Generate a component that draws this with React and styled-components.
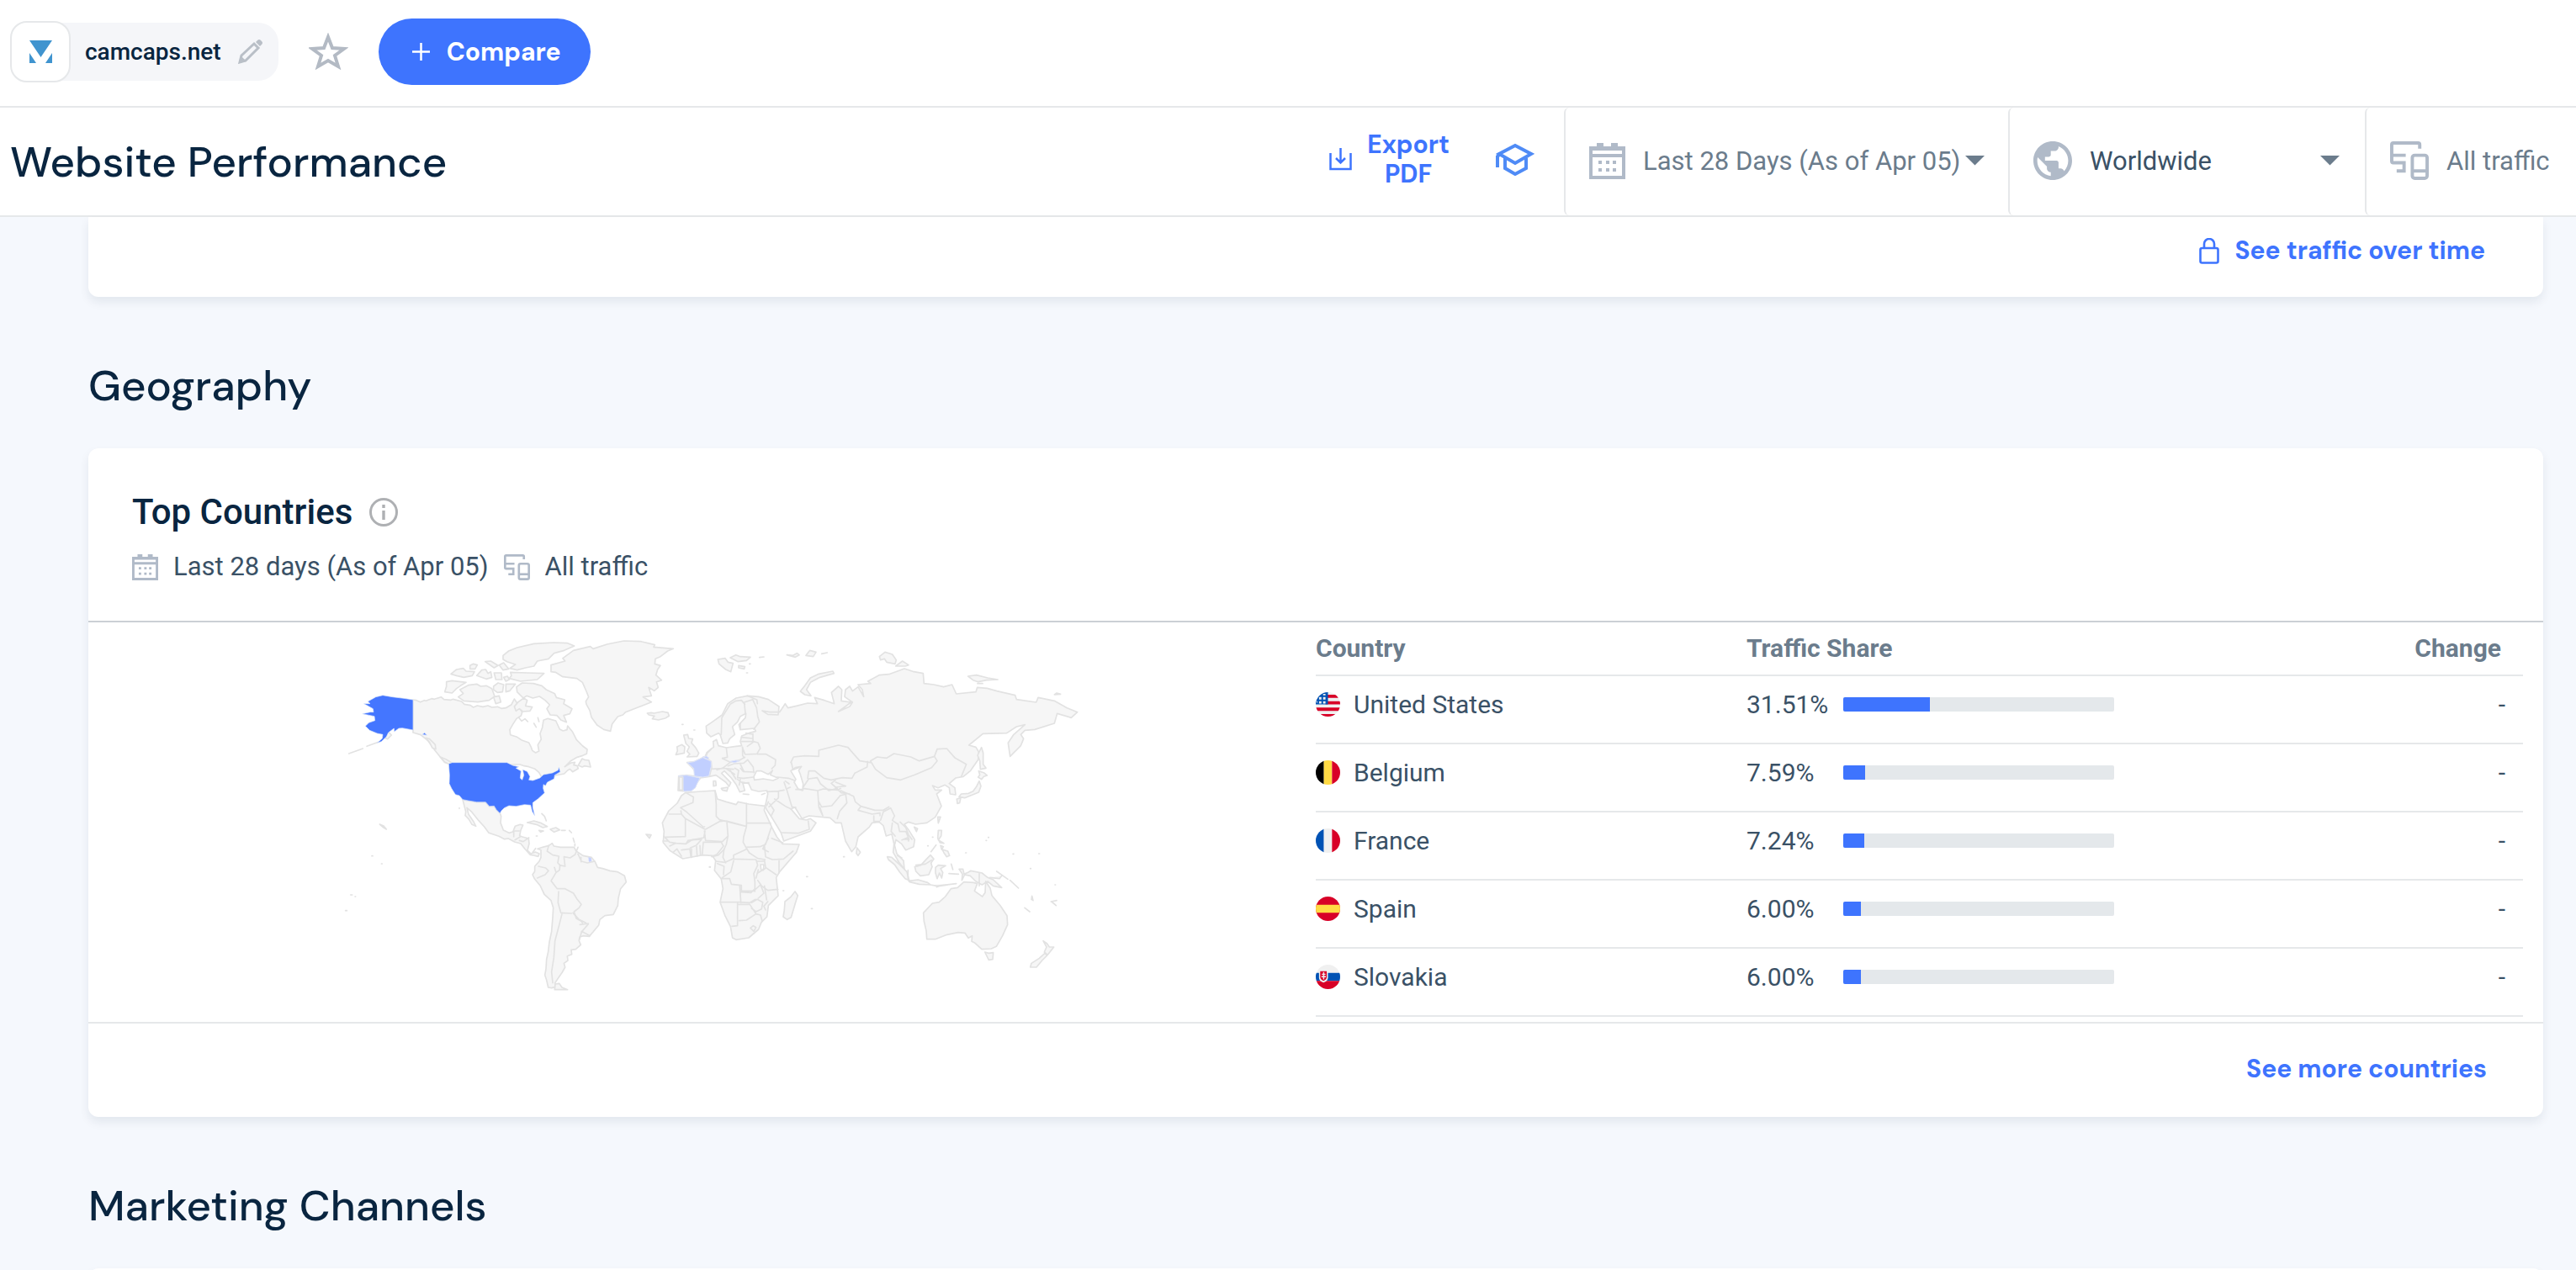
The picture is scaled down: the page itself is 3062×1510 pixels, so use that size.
import React, { useState } from 'react'
import styled, { createGlobalStyle } from 'styled-components';
import { MdPublic } from 'react-icons/md';

const countries = [
    { code: 'us', name: 'United States', share: 31.51 },
    { code: 'be', name: 'Belgium', share: 7.59 },
    { code: 'fr', name: 'France', share: 7.24 },
    { code: 'es', name: 'Spain', share: 6 },
    { code: 'sk', name: 'Slovakia', share: 6 },
];

/* ---------- icons ---------- */

const CalendarIcon = ({ size }) => (
    <svg width={size} height={size} viewBox='0 0 43 43' fill='#b0bac8' aria-hidden='true'>
        <path fillRule='evenodd' d='M9 0h8v4h9V0h8v4h9v39H0V4h9zM4 9v4h35V9zM4 17v22h35V17z' />
        <path d='M11 21h4v4h-4zM20 21h4v4h-4zM28 21h4v4h-4zM11 30h4v4h-4zM20 30h4v4h-4zM28 30h4v4h-4z' />
    </svg>
)

const DevicesIcon = ({ size }) => (
    <svg width={size} height={size} viewBox='0 0 47 47' fill='none' stroke='#b0bac8' strokeWidth='4' aria-hidden='true'>
        <path d='M36 9V4q0-2-2-2H4Q2 2 2 4v20q0 2 2 2h13v10H8M2 17h17' />
        <rect x='27' y='17' width='18' height='28' rx='3' />
        <path d='M27 36h18' />
    </svg>
)

const CaretIcon = () => (
    <svg width='23' height='12' viewBox='0 0 23 12' aria-hidden='true'>
        <path d='M0 0h23L11.500 11.500z' fill='#6b7c8c' />
    </svg>
)

const LogoIcon = () => (
    <svg width='27' height='27' viewBox='0 0 27 27' fill='#4094cf' aria-hidden='true'>
        <path d='M0 0h27L13.500 20zM0 15l8 12H0zM27 15l-8 12h8z' />
    </svg>
)

const PencilIcon = () => (
    <svg width='30' height='30' viewBox='0 0 30 30' aria-hidden='true'>
        <path d='M2 28l2-8L19 6l5 5L9 26z' fill='none' stroke='#b9bfc7' strokeWidth='3' />
        <path d='M1 29l2-9 7 7zM21 4l2-2q2-2 4 0l1 1q2 2 0 4l-2 2z' fill='#b9bfc7' />
    </svg>
)

const StarIcon = () => (
    <svg width='47' height='44' viewBox='0 0 47 44' aria-hidden='true'>
        <path d='M23 5l5 13 14 1-11 8 4 13-12-7-12 7 4-13-11-8 14-1z' fill='none' stroke='#b3bac4' strokeWidth='4' />
    </svg>
)

const PlusIcon = () => (
    <svg width='21' height='21' viewBox='0 0 21 21' aria-hidden='true'>
        <path d='M10.500 0v21M0 10.500h21' stroke='#fff' strokeWidth='2.500' />
    </svg>
)

const DownloadIcon = () => (
    <svg width='27' height='27' viewBox='0 0 27 27' fill='none' stroke='#3e74fe' strokeWidth='2.500' aria-hidden='true'>
        <path d='M1.500 6v19h24V6M13.500 0v17M8 12l5.500 5.500L19 12' />
    </svg>
)

const AcademyIcon = () => (
    <svg width='47' height='39' viewBox='0 0 47 39' fill='none' stroke='#4f8bf6' strokeWidth='4' aria-hidden='true'>
        <path d='M24 3l19 10-19 11L5 13zM3 29V16l3-3M12 18v12l12 7 13-7V18' />
    </svg>
)

const LockIcon = () => (
    <svg width='24' height='31' viewBox='0 0 24 31' fill='none' stroke='#3e74fe' strokeWidth='2.600' aria-hidden='true'>
        <rect x='1.500' y='12' width='21' height='17.500' rx='2' />
        <path d='M6 12V7a6 6 0 0 1 12 0v5' />
    </svg>
)

const InfoIcon = () => (
    <svg width='34' height='34' viewBox='0 0 34 34' aria-hidden='true'>
        <circle cx='17' cy='17' r='15.500' fill='none' stroke='#aeb0b3' strokeWidth='3' />
        <path d='M15.300 15h3.400v11h-3.400zM15.300 8h3.400v4h-3.400z' fill='#aeb0b3' />
    </svg>
)

const flagArt = {
    us: (
        <>
            <path d='M0 0h30v30H0z' fill='#f0f0f0' />
            <path d='M12 3h18v4H12zM12 11h18v4H12zM0 19h30v4H0zM0 27h30v3H0z' fill='#d80027' />
            <path d='M0 0h15v15H0z' fill='#0052b4' />
            <path d='M4 6h3v3H4zM9 6h3v3H9zM4 11h3v3H4zM9 11h3v3H9zM9 2h3v2H9zM1 11h1v2H1z' fill='#f0f0f0' />
        </>
    ),
    be: (
        <>
            <path d='M0 0h10v30H0z' fill='#000' />
            <path d='M10 0h10v30H10z' fill='#ffda44' />
            <path d='M20 0h10v30H20z' fill='#d80027' />
        </>
    ),
    fr: (
        <>
            <path d='M0 0h10v30H0z' fill='#0052b4' />
            <path d='M10 0h10v30H10z' fill='#f0f0f0' />
            <path d='M20 0h10v30H20z' fill='#d80027' />
        </>
    ),
    es: (
        <>
            <path d='M0 0h30v30H0z' fill='#d80027' />
            <path d='M0 10h30v10H0z' fill='#ffda44' />
        </>
    ),
    sk: (
        <>
            <path d='M0 0h30v10H0z' fill='#f0f0f0' />
            <path d='M0 10h30v10H0z' fill='#0052b4' />
            <path d='M0 20h30v10H0z' fill='#d80027' />
            <path d='M4 8h11v8q0 4-5.500 6Q4 20 4 16z' fill='#f0f0f0' />
            <path d='M5.500 8h8v7q0 3-4 5-4-2-4-5z' fill='#d80027' />
            <path d='M9 9h1.500v2H12v1.500h-1.500V14h2v1.500h-2V18H9v-2.500H7V14h2v-1.500H7.500V11H9z' fill='#f0f0f0' />
        </>
    ),
}

/* ---------- world map ---------- */

const westLand = [
    // Canada mainland
    'M273 276l12 2 14 6 14-6 6 2 20-8 10 2 24-8 10 9 25 2 8-3 30 8 10 10 22 4 10 7 14-6 20 4 18-4 14 6 20-2 14 6 16-2 20-12 10-20 12 18 16 30-4 12-16 10-14 22-10 18 2 18 24 8 18 12 24 8 8 16 4 12 12 8 12-6-4-22 12-20-4-20 8-22 4-26 16-6 28 8 14 30 12 6 14-4 2-14 18 22 14 28 22 22 16 12-2 16-14 6-20 6-24 14-20 20 22-14 14-2-4 10 12 2 4 10-20 12-10-10-8 5-12 12-32 6-13 12-25 9-14-2 4-12-10-18-14-12-22-8-20-4-12-4H413l-28-8-34-42-26-36-25-20-27-8z',
    // Mexico and Central America
    'M450 632l20 4 30 5h32l13 15 17-1 8 13 13 13 4 10-2 24 10 26 20 10 14-4 8-20 18-6 10 2-8 18-4 20 10 4 22 6 2 18-6 24 12 12 16-6 14 6-4 10-16-4-12-2-20-22-14-18-22-6-22-12-14 2-20-10-36-12-16-22-20-22-24-30-18-16 6 24 18 26 8 16-14-6-12-20-12-12 2-14z',
    // South America
    'M717 808l18-6 22-6 12-8 6 10 24 4 30 0 18 0 8 14 24 16 30 6 14 18 8 18 18 4 26 8 28 4 24 14 6 22-20 24-8 34-2 26-16 32-30 4-18 14-4 20-20 24-14 16-20-2-14 4-2 14 6 14-18 16-16 2 2 16-16 6 2 16-14 10 4 14-10 18-14 20-12 18 2 14-14 4-12-2-6-26-6-18 4-22 2-34 6-28 4-34 8-38 4-50 2-34-8-26-24-22-14-30-20-24-8-16 8-12 0-18 16-18 6-14 0-26z',
    'M780 1290l14-2 10 14 20 8h-46z',
    // Greenland
    'M765 152l50-14-8-10 38-28 60-14 10 8 50-16 60-12 60 2 50 12-4 8 70 6-20 8-26 20-18 8-2 18 20 6-10 14-6 20 20 18-18 6 6 20-14 12-20-12 10 30-30 4 30 18-50 20-42 16-10 10-18 6-20 26-6 26-24-6-24-16-20-28-6-24-12-22-2-10 10-16-8-20-14-32-20-14-50-6-26-16-16-2z',
    // Iceland
    'M1108 324l14-2 10 2 30-6 20 4 4 12-14 8-24 6-22-4 8-10-20-4z',
    // Ellesmere, Baffin and the rest of the arctic islands
    'M594 118l20-16 30-12 60-14 70-4 50 2 24 10-36 16-36 10-20 20-40 8-12 18-30 6-30 8-26-6 20-14-30-10-14-8z',
    'M620 178l60 2 60 2-24 22-60 6-40-10 8-10z',
    'M642 230l20-14 40 2 30 8 16 14 30 14 6 14 30 8-4 14 30 18-8 18-22 6 10 24-20-8-14-16-24-2-12-22 10-14-16-16-20-14-24 6-22-8-12 8-22-22z',
    'M440 240l30-16 30-4 14 8 20-2 20 10 10 28-20 14-40 6-50-4-20-14 18-12z',
    'M392 212l20-4 50 6-20 12-14 10-16 16-26-4 6-20z',
    'M408 184l20-16 24-4 10 10 30 2-8 14-30 6-26-6zM476 154l12-6 14 4-8 14-18 0zM530 140l20-2 26 16-14 8zM500 190l18-20 14-2 8 14 10-6 4 20-20 6zM562 180h26l2 24h-22zM560 228l16-12 20 6-4 26-18 2-14-10zM604 220l34 0-20 24-14 4zM580 152l16-8 18 22-20 4zM560 266l20-4 6 22-18 6zM596 196l14-4 6 12-12 6z',
    'M634 300l14-16 20-14 12 8-6 20 24 4-8 14-26 2-12-10-12 8z',
    'M862 510l14-24 8 4 16 2 6 24-22-4-8 4z',
    // Alaska panhandle and Vancouver
    'M318 412l14 4 20 20 2 16-12-4-10-20zM370 480l20 8 20 12-4 8-20-10z',
    // Antilles
    'M680 714l24-6 26 8 22 12-16 4-20-10zM762 738l20-6 14 8-20 8zM722 742l16 2-10 4zM802 742h14M732 682l10 10 6 16M830 742l8 8M844 770l4 14M850 790v8',
    // islands of the Pacific and the Atlantic
    'M154 720l14 6 10 12-10-6zM1104 756l18 2-6 12zM50 972h6M66 978h2M32 1028h5M126 833h3M160 861h3M712 762h4M438 662v2M1330 872h3',
    'M44 468l50-18M108 442l44-16M172 412l10 4 14-14-10-10',
]

const westBorders = [
    // Hudson Bay islands, Great Lakes
    'M650 340l10 12 12-8 10 10M704 360l8 14M718 340l4 14',
    'M632 764v-20h20M636 776l20-12M652 778l14 4 20-14M700 820l10-14',
    // South American states
    'M757 796l-6 20 20 14 22 4-4 24 8 8-2 18-12 8-6-18M720 870l26 6 10 10-12 14-28 12M795 866l20 4-4-34 22 4 18-12 10-26M861 826l12 26 22 6 26-6M872 838v16M783 892l-18 30 22 28 28 0 30 16 12 20 16 20-8 12-18 14 8 24 18 10 4 6M792 960l-2 40 10 36 38 2M805 1036l-10 40-16 60-4 60-8 50 4 40M868 1078l30-4M898 1076l-24 28-8 28M874 1102l30 16',
    'M843 1036l22 24 24 12',
]

const usLand = [
    'M98 290h22l-8-8 28-16 25-6 35 6 40 5 33 5v108l-38-7-13 1-16 12-1-12-20 15-7 15-18 17-15 5 18-16 2-14-20-4-27-11-15-15 12-12 22-8-2-15-43-9 28-6h12l-2-12-18-10z',
    'M413 500h195l20 10 22 5-10 5 18 10-3 25 7 7 6-17-4-20 16 7 10 18-4 12 14 2 25-9 13-12 32-6 20-10 3-11 5 17-20 12-2 13-24 12-7 13-7-5-1 14 5 16-24 22-18 13v17l7 30-9-15-6-23-22-2-30 6-25-2-17 8-10 10-5 9-13-13-8-13-17 1-13-15h-32l-30-5-20-4-12-14-14-4-14-22-8-17 1-30-3-40z',
    'M306 400l8-6 8 8z',
]

const eastLand = [
    // Eurasia
    'M80 548l28-3 42 5-18-28-22-22 25-3 25-12 15-7 5-13 15-13 10-7-2-20 12-7 7 22 28 7 35-5 20-2-5-15 5-20 25-10 25-7-5-10-50 5-5-18 23-25 2-15-20 10-10 20-18 17 8 28-18 15-7 15-17 2-10-32-6-5-27 13-15-13-2-25 22-15 35-25 20-40 30-20 40-8 40 3 35 10 38 25-3 30-37-2-20-13 27 5 35 0 20-30 10 15 30-7 40-10 35 2-10-22 35 10 35 12-10-40 25-22 12 12-2 40 35 5-45 33 40-18 10-15-28-20 3-25 15-12 10 17 20-15 20 35-5-25-15-18 45-4-10-8 40-22 35-3 55-20 30 10 37 7 3 36 35 4 35 8 30-8 15 33 70-7 5-16 35 3 35 10 65 15 5 15 70 10 7-17 58 12 45 25 37 15-22 20-50-15-10 35-70 22-35 3-15 15 10 15-10 25-38 38-7-48 20-30 40-35-30 7-35 23-85 2-50 41 25 7 10 17-2 28-28 40-25 20-27 5-23 20 20 15 3 25-20-3-3-22-15-10-25 10-20-8 10 16 23 0-18 14 17 43-22 40-30 20-40 5-25-8-15 8 15 20 22 35-4 25-28 12-15-22-20-15-5 20 8 30 24 25 3 30-20-25-20-35 3-30-8-35-20 7-10-37-15-13-25 3-10 15-40 35-8 35-15 18-22-38-15-65-20 0-20-18-75-7-25 10-25-40-15 5 30 35 25 5 15-5 20 15-20 30-95 35-10-30-30-50-20-30-7-15 2-5 8-38-3-12-30 3-25-6-10-22-22-5 8 30-18 5-12-25-18-25-25-25-10 8 33 34-6 13-12-15-35-25-25 5-30 5-15 20-5 15-15 10-25 2-20-2z',
    // Africa
    'M105 607l55-4 50-3 8 30 32 10 35 10 7-10 38 8 58 7-3 15 27 60 18 35 20 25 60 2-10 28-60 70-12 20 7 65-35 35-5 40-20 20-10 25-35 30-45 7-13-7-7-40-20-40-17-47 10-48-6-35-24-30 4-35-12-18-35-2-70 13-45-28-25-30 3-40-6-30 23-43 30-27 15-27z',
    // Madagascar
    'M495 960l10 14-6 18-18 60-14 8-14-10 4-24 2-30 20-16z',
    // British Isles
    'M98 402l14-2 4 14 14 2-4 14 14 16 12 20-6 12-36 2 10-10-10-10 8-16-12-12zM74 444l18-8 10 8-2 22-30 6 6-14z',
    // Mediterranean islands
    'M204 566l8 0 2 16-10 2zM232 592l24-4-4 14-16-4zM310 612l20 2M376 614l12-4',
    // Svalbard, Franz Josef, Novaya Zemlya, Severnaya Zemlya
    'M220 132l26-4 10 14 18 4-8 30-18-8-24-20zM264 126l20-10 16 6 36 2-14 12-30 4zM294 154l22 4-2 8-20-4zM368 125l16-2M466 116l22 2 14-8 8 6-14 8zM534 118l14-18 22 6-10 16zM590 112l20-4M322 180h4M332 148h4',
    'M514 246l16-20 20-28 30-14 50-10 4 8-50 14-34 18-14 26 16 22-22-4z',
    'M796 122l20-16 26 8 14 20-4 14-30-6-8-12-14 4zM854 156l24-18 22 14-12 4z',
    'M1112 192l30-4 40 10 36 6-40 2-30 6-18-6zM1146 218h18M1420 258l8-6 14 4z',
    // Japan, Sakhalin, Taiwan
    'M1160 446l6 20 0 40 10 14-20 4-2-30-8-20zM1150 530l18 6 12 10-12 4-8 10-12-8 6-8zM1152 566l6 18-8 22-24 10-26 10-20-4 8-10 26-2 16-8 12-16zM1072 630l14-4-4 18-8 2zM1004 694l10 0-8 22zM920 730l12 6-4 10z',
    // Philippines, Indonesia, Papua
    'M1006 742l12 0-2 20-10 14 20 12-14-2-8-16zM980 818l18-24M1014 796l10 4-6 10zM1020 810l20 6 6 16-10 4-10-14zM716 804l12 16-8 12-6-8z',
    'M824 836l16 2 30 28 24 24 8 30-14-6-20-24-18-26-22-18zM900 922l34-4 34 10 10 8-40-2-34-8zM978 936l22 4 70-8M1000 944l12-4 30-4',
    'M922 872l22-6 20-22 14-14 12 14-10 14 4 14-12 28-30 4-16-16zM996 874l10-8 26 2-18 10 8 14-4 20-8-18-8 20-6-20zM1052 862l6 20M1044 896l34 2M1080 880l14 0 4 18 14-6 10-6 40 8 20 16 20 8 30 28-30-6-20-16-20 12-22-12-20-20-20-4-10 20 2-22z',
    'M1190 910l34 4 8-10M1214 888l20 14 20 14M1262 920l30 28M1340 976l4 16-6-4zM1314 1018l18 14M1410 996l16 14M1408 996l20-4',
    // Australia and New Zealand
    'M953 1036l2 30 8 34 2 30 30 0 42-16 40-8 24 2 12 18 14-8-2 20 12 6 24 22 34-2 18-8 22-38 18-40-2-32-24-36-30-36-6-26-16-24-2 40-10 14-28-20 10-26-14-4-34-2-22 20-24 4-20 28-22 20-24 4z',
    'M1172 1176l14 4 16-2-2 24-14 2zM1380 1136l14 10 8 12 16 0-22 28-12-10 8-18zM1386 1180l8 8-18 18-20 24-22 0 4-14 28-18z',
    // tiny islands
    'M92 364h4M134 384h4M190 873h3M536 907h4M553 1021h4M452 957h3M668 836h3M1176 778h2M1184 767h2M1103 822h3M1272 826h3M1364 825h3M1334 878h2M1422 936h2M985 766h2M968 797h2',
]

const seas = [
    'M348 550l10-20 17 0 25 12 15-14-8 16 28 12-18 8-35-6-32 4z',
    'M480 530l16-12 22-4-10 14 6 14 10 34-2 24-16-6-14-24 6-10z',
    'M372 864l12 0-2 20-8-2z',
]

const eastBorders = [
    // northern and eastern Europe
    'M232 400l2-60 30-48 20-12 20-2 12 14M300 382l0-22M318 325l-4-40 30-10 14 30 4 30 6 20-20 26M345 398l0 30-20 14M305 425l42 0 16 4 8 20-12 20-42 2-10-26M308 445l0 30 6 8M250 447l4 34-18 4M362 470l30 0 34 20-2 20-12 12M320 395l22 4M304 410l40 4M325 262l34 14 2 14',
    'M196 452l-14 14-6 16 20 14 2 22-8 30M236 485l28 14-28 22-40 2M264 499l34-8 18-10M256 512l22-8 34-2 14-12 20 26 2 20M300 520l10 12 40 2M280 520l14 8-4 26 20 2M312 556l34-4M216 526l20-6 40 4M300 560l-4 20M290 560l20 14 20-2M250 522l30 20M264 528l20 30M168 480l16 4M300 506l12 24',
    'M96 552l0 48',
    // Caucasus, Middle East, central Asia
    'M432 552l40 4 22 8M456 570l8 24 14-6M460 566l14 10M464 592l20 66 14 2M396 604l40-2 20-4M436 602l0 24-34 32M400 640l-6 14M422 630l42 28 18 8M404 646l16 24-10 20M446 750l60 2 40-14-4-30',
    'M480 500l10-20 40-4 50 2 0-22 70-18 34 8 12 14 30 34 38 6M482 500l6 26 20-8M540 556l4-26 22 0 12 10 20 16 26 6 40-8 34 2 10-18 44-22 2-20M524 588l20-30 30-4 12 22 30 24 30-8M640 562l-16 12 16 14 36-4-36-14M764 494l24-14 34 4 26-16 60 12 30 14 54-16 10 16-20 24-60 26-50 18-50-8-40-30zM992 478l10-26 34-2 30 34 40 22-18 44',
    'M576 600l20-6 52 4 10-6M524 592l52 8 4 60 14 30M580 640l10 18 36-4 30-36 22-6M594 690l-10-30M646 700l8-26 26-30-4-28M658 600l46 20 6 20 20 16 50 14 30 0 20-12M730 656l-10 14 50 14 28-4 0 10M776 690l0 20 20 0M800 706l10-30 26-14 14 28-8 16 20 14M842 716l-4 30 14 16M862 718l6 28 22 0 12 28-20 0M870 712l20 20 10 26 12 16M876 776l20-8 4 12M860 832l16 8M498 596l26 0M640 590l20 18 30 4',
    // insular borders
    'M1152 896v44M926 866l34-4 22-14M898 884v30',
    // Africa, north
    'M105 607l28 16-2 20-44 18 20 14 60 54 6 0M46 684l44 0-2-12M90 684l14 16 70 38M104 700l0 64-70 2M210 600l4 48 0 44 12 12 96 24M322 646v82M322 716h86M226 710l24-2 72 20M176 738l50-28M252 712l4 50-20 20-60-4-4-34M174 744l-4 24-56 10M322 728l-10 36-2 20 10 18 50-2 20-8 20-60M256 762l-6 30-8 18M242 810l-20 20-24 6M390 788l-10 20 20 10M412 770l40 16M400 770l-14 26 4 40 24 10 40-2 34-28',
    // Africa, west
    'M28 764l20 20 24 4 34 2M48 798l20-10M60 820l14-12 16 26M90 812l30-4 4 30M126 808l0 30M106 790l22-14 34-2-20 22-20 8M144 800l2 34M156 796l2 34M168 784l-4 46M24 780l20 0M168 784l64 0 8 14-24 30-16 6M114 778l-8 12',
    // Africa, centre and south
    'M242 808l-4 30 10 20M212 852l34 4 30-14 0-12 44-20M320 802l12 20 30 20 26 4M276 844l80 2 6 20-14 30 4 30 0 34M232 914l30 0 6 20 36 4 0 20 46 0M276 850l-10 40-30 20M218 860l24 10-2 30M362 852l24 0M386 848l4 26 38 26M362 894l26-16M438 850v44M356 912l8-30M362 920l14 20 22 16 36-4M298 940l4 60M230 998l70 0 34 2 20-12M304 962l34 2 14-14M350 956l22-20 12 30-20 18M386 940l8 50M340 1000l20-12 20 10-4 24-20 10-16-12M290 1002l0 80-20 2M294 1006l40 0 22 34-34 22-26 2M356 1040l16 4 6 22M398 996l-14 16 6 14M336 1090l10-8 10 6-8 14z',
]

const highlights = [
    // France, Spain, Belgium, Slovakia
    'M112 500l22-3 26-12 6-3 30 14 0 18-8 34-22 4-30-4-2-26z',
    'M80 548l28-3 48 10-10 20-6 14-14 12-26 2-4-6 0-46-12 0z',
    'M168 480l10-3 10 6-4 4z',
    'M264 496l20-4 14 2-18 6z',
]

const WorldMap = () => (
    <MapSvg viewBox='0 0 2700 1365' role='img' aria-label='Traffic share by country'>
        <g fill='#f6f6f6' stroke='#e2e2e2' strokeWidth='5' strokeLinejoin='round' strokeLinecap='round'>
            {westLand.map((d) => <path key={d} d={d} />)}
            {westBorders.map((d) => <path key={d} d={d} fill='none' />)}
            {usLand.map((d) => <path key={d} d={d} fill='#4476ff' stroke='#dce7fb' strokeWidth='2' />)}
            <path d='M898 838l10 2 2 12-10 2z' fill='#c6d1ff' stroke='none' />
            <g transform='translate(1140 0)'>
                {eastLand.map((d) => <path key={d} d={d} />)}
                {seas.map((d) => <path key={d} d={d} fill='#fff' />)}
                {eastBorders.map((d) => <path key={d} d={d} fill='none' />)}
                {highlights.map((d) => <path key={d} d={d} fill='#c1cfff' stroke='#dfe5f8' strokeWidth='3' />)}
                <path d='M82 552h12v46H82z' />
            </g>
        </g>
    </MapSvg>
)

/* ---------- page ---------- */

function App() {
    const [period, setPeriod] = useState('28d');
    const [region, setRegion] = useState('world');
    const [traffic, setTraffic] = useState('all');

    return (
        <>
            <GlobalStyle />
            <TopBar>
                <SiteChip>
                    <SiteIcon><LogoIcon /></SiteIcon>
                    <SiteName>camcaps.net</SiteName>
                    <IconButton aria-label='Edit website'><PencilIcon /></IconButton>
                </SiteChip>
                <IconButton aria-label='Add to favorites'><StarIcon /></IconButton>
                <CompareButton><PlusIcon />Compare</CompareButton>
            </TopBar>

            <FilterBar>
                <PageTitle>Website Performance</PageTitle>
                <Actions>
                    <ExportButton><DownloadIcon /><span>Export<br />PDF</span></ExportButton>
                    <IconButton aria-label='Academy'><AcademyIcon /></IconButton>
                </Actions>
                <Filter $width={528}>
                    <CalendarIcon size={43} />
                    <FilterSelect aria-label='Period' $muted value={period} onChange={(e) => setPeriod(e.target.value)}>
                        <option value='28d'>Last 28 Days (As of Apr 05)</option>
                    </FilterSelect>
                    <CaretIcon />
                </Filter>
                <Filter $width={424}>
                    <MdPublic viewBox='2 2 20 20' size={46} color='#b0bac8' aria-hidden='true' />
                    <FilterSelect aria-label='Country' $grow value={region} onChange={(e) => setRegion(e.target.value)}>
                        <option value='world'>Worldwide</option>
                    </FilterSelect>
                    <CaretIcon />
                </Filter>
                <Filter $width={251}>
                    <DevicesIcon size={46} />
                    <FilterSelect aria-label='Traffic type' $muted value={traffic} onChange={(e) => setTraffic(e.target.value)}>
                        <option value='all'>All traffic</option>
                    </FilterSelect>
                </Filter>
            </FilterBar>

            <Content>
                <Card $attached>
                    <CardFooter>
                        <MoreLink href='#traffic'><LockIcon />See traffic over time</MoreLink>
                    </CardFooter>
                </Card>

                <SectionTitle>Geography</SectionTitle>
                <Card>
                    <CardHeader>
                        <CardTitle>Top Countries<InfoIcon /></CardTitle>
                        <CardMeta>
                            <CalendarIcon size={31} />
                            <span>Last 28 days (As of Apr 05)</span>
                            <DevicesIcon size={31} />
                            <span>All traffic</span>
                        </CardMeta>
                    </CardHeader>
                    <CardBody>
                        <MapPane><WorldMap /></MapPane>
                        <TablePane>
                            <CountryTable>
                                <thead>
                                    <tr>
                                        <Th $width='512px'>Country</Th>
                                        <Th>Traffic Share</Th>
                                        <Th $right>Change</Th>
                                    </tr>
                                </thead>
                                <tbody>
                                    {countries.map((country) => (
                                        <tr key={country.code}>
                                            <Td>
                                                <Cell>
                                                    <Flag viewBox='0 0 30 30' aria-hidden='true'>{flagArt[country.code]}</Flag>
                                                    {country.name}
                                                </Cell>
                                            </Td>
                                            <Td>
                                                <Cell>
                                                    <Share>{country.share.toFixed(2)}%</Share>
                                                    <Track><Bar style={{ width: `calc(${country.share}% + 2px)` }} /></Track>
                                                </Cell>
                                            </Td>
                                            <Td $right>-</Td>
                                        </tr>
                                    ))}
                                </tbody>
                            </CountryTable>
                        </TablePane>
                    </CardBody>
                    <CardFooter $divided>
                        <MoreLink href='#countries'>See more countries</MoreLink>
                    </CardFooter>
                </Card>

                <SectionTitle>Marketing Channels</SectionTitle>
                <Card $empty />
            </Content>
        </>
    )
}

export default App

const heading = `'DM Sans', Inter, 'Open Sans', sans-serif`;

const GlobalStyle = createGlobalStyle`
    * {
        box-sizing: border-box;
    }
    html, body {
        height: 100%;
        margin: 0;
        overflow: hidden;
    }
    body {
        background: #f5f8fd;
        color: #3a5166;
        font-family: Roboto, 'Liberation Sans', sans-serif;
        font-size: 30px;
    }
    button, select {
        font: inherit;
    }
    svg {
        flex: none;
        display: block;
    }
`

const TopBar = styled.header`
    display: flex;
    align-items: center;
    height: 128px;
    padding: 0 12px 4px;
    gap: 36px;
    background: #fff;
    border-bottom: 2px solid #e6e8ea;
`

const SiteChip = styled.div`
    display: flex;
    align-items: center;
    height: 69px;
    padding-right: 18px;
    background: #f5f6f9;
    border-radius: 24px;
`

const SiteIcon = styled.div`
    display: grid;
    place-items: center;
    width: 72px;
    height: 73px;
    background: #fff;
    border: 2px solid #e6e8ea;
    border-radius: 20px;
`

const SiteName = styled.span`
    padding: 0 20px 0 17px;
    color: #092540;
    font-size: 28px;
    font-weight: 500;
`

const IconButton = styled.button`
    padding: 0;
    background: none;
    border: 0;
    cursor: pointer;
`

const CompareButton = styled.button`
    display: flex;
    align-items: center;
    gap: 20px;
    height: 79px;
    padding: 0 35px 0 40px;
    background: #3e74fe;
    border: 0;
    border-radius: 40px;
    color: #fff;
    font-family: ${heading};
    font-size: 30px;
    font-weight: 700;
    cursor: pointer;
`

const FilterBar = styled.div`
    display: flex;
    height: 130px;
    padding-left: 12px;
    background: #fff;
    border-bottom: 2px solid #e6e8ea;
    overflow: hidden;
`

const PageTitle = styled.h1`
    flex: 1;
    align-self: center;
    margin: 0;
    color: #092540;
    font-family: ${heading};
    font-size: 51px;
    font-weight: 500;
`

const Actions = styled.div`
    display: flex;
    align-items: center;
    gap: 54px;
    padding: 0 35px 6px 0;
`

const ExportButton = styled.button`
    display: flex;
    align-items: center;
    gap: 18px;
    padding: 0;
    background: none;
    border: 0;
    color: #3e74fe;
    font-family: ${heading};
    font-size: 30px;
    font-weight: 700;
    line-height: 35px;
    cursor: pointer;
`

const Filter = styled.label`
    display: flex;
    align-items: center;
    flex: none;
    width: ${({ $width }) => $width}px;
    padding: 0 30px 2px 28px;
    border-left: 2px solid #e6e8ea;
    border-radius: 6px 0 0 6px;
`

const FilterSelect = styled.select`
    flex: ${({ $grow }) => ($grow ? '1' : 'none')};
    appearance: none;
    margin: 0 5px 0 21px;
    padding: 0;
    background: none;
    border: 0;
    color: ${({ $muted }) => ($muted ? '#6b7c8c' : '#3a5166')};
    font-size: 31px;
`

const Content = styled.main`
    padding: 0 39px 0 105px;
`

const Card = styled.section`
    min-height: ${({ $empty }) => ($empty ? '200px' : '0')};
    background: #fff;
    border-radius: ${({ $attached }) => ($attached ? '0 0 12px 12px' : '12px')};
    box-shadow: 0 6px 12px rgba(9, 37, 64, 0.08);
`

const SectionTitle = styled.h2`
    margin: 0;
    padding: 72px 0 40px;
    color: #092540;
    font-family: ${heading};
    font-size: 51px;
    font-weight: 500;
    line-height: 68px;
`

const CardHeader = styled.div`
    padding: 48px 52px 43px;
    border-bottom: 2px solid #cbd0d5;
`

const CardTitle = styled.h3`
    display: flex;
    align-items: center;
    gap: 20px;
    margin: 0;
    color: #092540;
    font-size: 42px;
    font-weight: 500;
    line-height: 56px;
`

const CardMeta = styled.div`
    display: flex;
    align-items: center;
    gap: 18px;
    padding-top: 16px;
    font-size: 31px;
    line-height: 42px;
`

const CardBody = styled.div`
    display: grid;
    grid-template-columns: 1fr 1fr;
`

const MapPane = styled.div`
    display: flex;
    align-items: flex-start;
    justify-content: center;
    padding-left: 30px;
`

const MapSvg = styled.svg`
    width: 900px;
    max-width: 100%;
`

const TablePane = styled.div`
    padding: 0 24px 6px 0;
`

const CountryTable = styled.table`
    width: 100%;
    border-spacing: 0;
    table-layout: fixed;
`

const Th = styled.th`
    width: ${({ $width }) => $width || 'auto'};
    height: 64px;
    padding: 0 ${({ $right }) => ($right ? 26 : 0)}px 2px 0;
    border-bottom: 2px solid #e6e8ea;
    color: #6b7c8c;
    font-size: 30px;
    font-weight: 700;
    text-align: ${({ $right }) => ($right ? 'right' : 'left')};
`

const Td = styled.td`
    height: 81px;
    padding: 0 ${({ $right }) => ($right ? 21 : 0)}px 13px 0;
    border-bottom: 2px solid #e6e8ea;
    text-align: ${({ $right }) => ($right ? 'right' : 'left')};
`

const Cell = styled.div`
    display: flex;
    align-items: center;
    gap: 16px;
`

const Flag = styled.svg`
    width: 29px;
    height: 29px;
    border-radius: 50%;
    overflow: hidden;
`

const Share = styled.span`
    width: 99px;
`

const Track = styled.div`
    width: 322px;
    height: 17px;
    background: #e4e8eb;
    border-radius: 2px;
    overflow: hidden;
`

const Bar = styled.div`
    height: 100%;
    background: #3e74fe;
`

const CardFooter = styled.div`
    display: flex;
    justify-content: flex-end;
    padding: ${({ $divided }) => ($divided ? '34px 67px 37px' : '20px 69px 35px')};
    border-top: ${({ $divided }) => ($divided ? '2px solid #e6e8ea' : '0')};
`

const MoreLink = styled.a`
    display: flex;
    align-items: center;
    gap: 18px;
    color: #3e74fe;
    font-family: ${heading};
    font-size: 30px;
    font-weight: 700;
    line-height: 40px;
    text-decoration: none;
`
